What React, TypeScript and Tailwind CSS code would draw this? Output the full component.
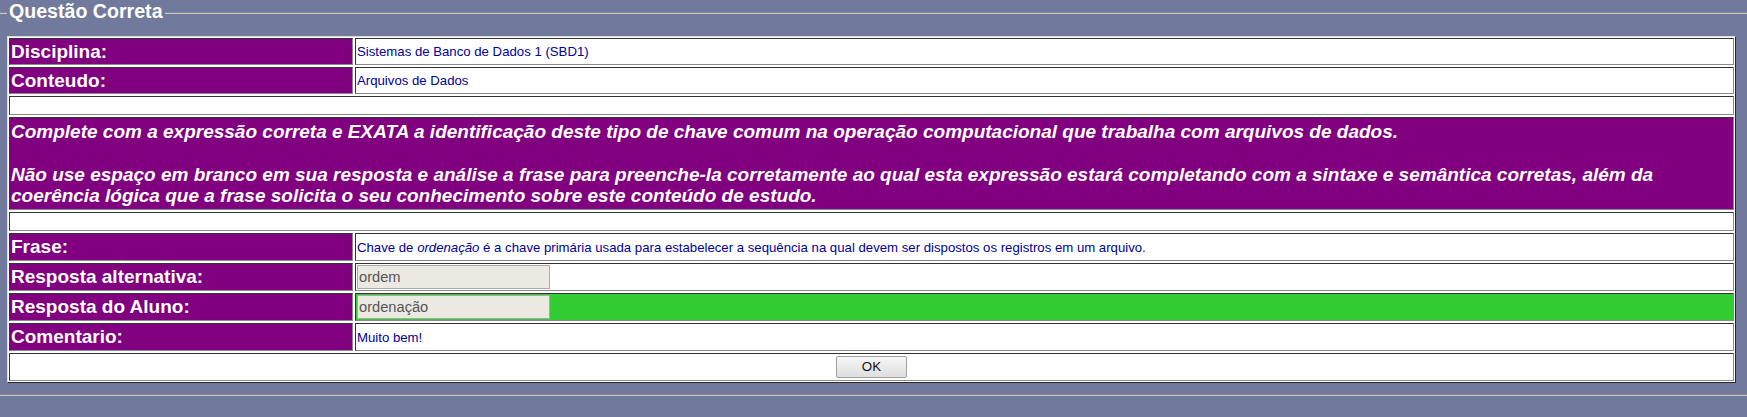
import React from "react";

const cell =
  "border border-t-[#333] border-l-[#333] border-r-[#8a8a8a] border-b-[#8a8a8a] p-[1px]";

const Label = ({ children }: { children: React.ReactNode }) => (
  <div
    className={`${cell} flex w-[344px] shrink-0 items-center bg-[#800080] text-[19px] leading-[21.5px] font-bold text-white`}
  >
    {children}
  </div>
);

const Value = ({
  children,
  green,
}: {
  children?: React.ReactNode;
  green?: boolean;
}) => (
  <div
    className={`${cell} flex flex-1 items-center text-[13.2px] leading-[15px] text-[#000099] ${
      green ? "bg-[#33cc33]" : "bg-white"
    }`}
  >
    {children}
  </div>
);

const Row = ({
  label,
  h,
  green,
  children,
}: {
  label: string;
  h: string;
  green?: boolean;
  children?: React.ReactNode;
}) => (
  <div className={`flex gap-[2px] ${h}`}>
    <Label>{label}</Label>
    <Value green={green}>{children}</Value>
  </div>
);

const Field = ({ value }: { value: string }) => (
  <input
    readOnly
    value={value}
    className="h-[24px] w-[193px] border border-[#a9a9a9] bg-[#ebe9e2] px-[1px] text-[14.67px] text-[#555] outline-none"
  />
);

const Empty = () => <div className={`${cell} h-[19px] bg-white`} />;

const Groove = ({ className }: { className: string }) => (
  <div className={`h-[2px] border-t border-[#8a8a8a] bg-[#c6c6c6] ${className}`} />
);

export default function App() {
  return (
    <div className="h-screen w-full overflow-hidden bg-[#717a9c] font-['Liberation_Sans',Arial,sans-serif]">
      <div className="flex h-[26px] items-center">
        <Groove className="w-[7px]" />
        <span className="self-start px-[2px] text-[19.6px] leading-[23px] font-bold text-white">
          Questão Correta
        </span>
        <Groove className="flex-1" />
      </div>

      <div className="mt-[10px] ml-[7px] flex w-[1729px] flex-col gap-[2px] border border-t-[#dcdcdc] border-l-[#dcdcdc] border-r-[#262626] border-b-[#262626] bg-white p-[1px]">
        <Row label="Disciplina:" h="h-[27px]">
          Sistemas de Banco de Dados 1 (SBD1)
        </Row>
        <Row label="Conteudo:" h="h-[27px]">
          Arquivos de Dados
        </Row>
        <Empty />
        <div
          className={`${cell} flex h-[93px] items-center bg-[#800080] text-[19px] leading-[21.5px] font-bold italic text-white`}
        >
          <div>
            <div>
              Complete com a expressão correta e EXATA a identificação deste tipo de chave
              comum na operação computacional que trabalha com arquivos de dados.
            </div>
            <div className="mt-[21.5px]">
              Não use espaço em branco em sua resposta e análise a frase para preenche-la
              corretamente ao qual esta expressão estará completando com a sintaxe e
              semântica corretas, além da coerência lógica que a frase solicita o seu
              conhecimento sobre este conteúdo de estudo.
            </div>
          </div>
        </div>
        <Empty />
        <Row label="Frase:" h="h-[28px]">
          <span>
            Chave de <i>ordenação</i> é a chave primária usada para estabelecer a sequência
            na qual devem ser dispostos os registros em um arquivo.
          </span>
        </Row>
        <Row label="Resposta alternativa:" h="h-[28px]">
          <Field value="ordem" />
        </Row>
        <Row label="Resposta do Aluno:" h="h-[28px]" green>
          <Field value="ordenação" />
        </Row>
        <Row label="Comentario:" h="h-[28px]">
          Muito bem!
        </Row>
        <div className={`${cell} flex h-[28px] items-center justify-center bg-white`}>
          <button className="h-[22px] w-[71px] rounded-[2px] border border-[#a0a0a0] bg-gradient-to-b from-[#f6f6f6] to-[#dedede] text-[13.33px] text-[#111]">
            OK
          </button>
        </div>
      </div>

      <Groove className="mt-[11px] w-full" />
    </div>
  );
}
